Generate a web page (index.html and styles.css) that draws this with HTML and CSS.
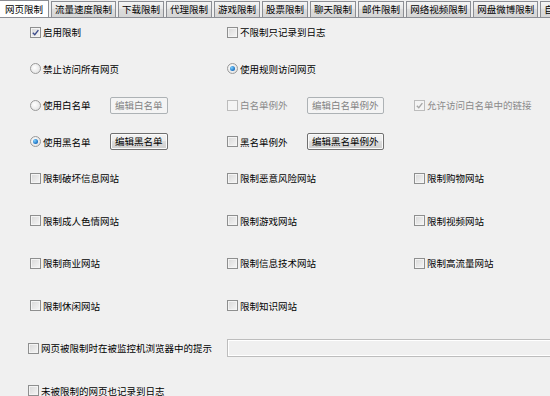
FILE: index.html
```html
<!DOCTYPE html>
<html lang="zh-CN">
<head>
<meta charset="utf-8">
<title>网页限制</title>
<link rel="stylesheet" href="styles.css">
</head>
<body>
<div class="tabs">
  <div class="tab active">网页限制</div>
  <div class="tab">流量速度限制</div>
  <div class="tab">下载限制</div>
  <div class="tab">代理限制</div>
  <div class="tab">游戏限制</div>
  <div class="tab">股票限制</div>
  <div class="tab">聊天限制</div>
  <div class="tab">邮件限制</div>
  <div class="tab">网络视频限制</div>
  <div class="tab">网盘微博限制</div>
  <div class="tab">自定义限制</div>
</div>
<div class="panel">
  <div class="group g1">
    <div class="row">
      <div class="cell"><label class="ctl"><span class="cb"><svg viewBox="0 0 10 10"><path d="M2 5.2 L4.2 7.5 L8.2 2.3" /></svg></span>启用限制</label></div>
      <div class="cell"><label class="ctl"><span class="cb"></span>不限制只记录到日志</label></div>
    </div>
    <div class="row">
      <div class="cell"><label class="ctl"><span class="rb"></span>禁止访问所有网页</label></div>
      <div class="cell"><label class="ctl"><span class="rb on"></span>使用规则访问网页</label></div>
    </div>
    <div class="row">
      <div class="cell"><label class="ctl w80"><span class="rb"></span>使用白名单</label><span class="btn disabled">编辑白名单</span></div>
      <div class="cell"><label class="ctl w80 dis"><span class="cb dis"></span>白名单例外</label><span class="btn disabled">编辑白名单例外</span></div>
      <div class="cell"><label class="ctl dis"><span class="cb dis"><svg viewBox="0 0 10 10"><path class="grey" d="M2 5.2 L4.2 7.5 L8.2 2.3" /></svg></span>允许访问白名单中的链接</label></div>
    </div>
    <div class="row">
      <div class="cell"><label class="ctl w80"><span class="rb on"></span>使用黑名单</label><span class="btn">编辑黑名单</span></div>
      <div class="cell"><label class="ctl w80"><span class="cb"></span>黑名单例外</label><span class="btn">编辑黑名单例外</span></div>
    </div>
  </div>
  <div class="group g2">
    <div class="row">
      <div class="cell"><label class="ctl"><span class="cb"></span>限制破坏信息网站</label></div>
      <div class="cell"><label class="ctl"><span class="cb"></span>限制恶意风险网站</label></div>
      <div class="cell"><label class="ctl"><span class="cb"></span>限制购物网站</label></div>
    </div>
    <div class="row">
      <div class="cell"><label class="ctl"><span class="cb"></span>限制成人色情网站</label></div>
      <div class="cell"><label class="ctl"><span class="cb"></span>限制游戏网站</label></div>
      <div class="cell"><label class="ctl"><span class="cb"></span>限制视频网站</label></div>
    </div>
    <div class="row">
      <div class="cell"><label class="ctl"><span class="cb"></span>限制商业网站</label></div>
      <div class="cell"><label class="ctl"><span class="cb"></span>限制信息技术网站</label></div>
      <div class="cell"><label class="ctl"><span class="cb"></span>限制高流量网站</label></div>
    </div>
    <div class="row">
      <div class="cell"><label class="ctl"><span class="cb"></span>限制休闲网站</label></div>
      <div class="cell"><label class="ctl"><span class="cb"></span>限制知识网站</label></div>
    </div>
    <div class="row wide">
      <div class="cell"><label class="ctl"><span class="cb"></span>网页被限制时在被监控机浏览器中的提示</label></div>
      <div class="cell"><span class="textbox"></span></div>
    </div>
    <div class="row wide">
      <div class="cell"><label class="ctl"><span class="cb"></span>未被限制的网页也记录到日志</label></div>
    </div>
  </div>
</div>
</body>
</html>
```
FILE: styles.css
```css
html, body {
  margin: 0;
  padding: 0;
  width: 550px;
  height: 396px;
  overflow: hidden;
  background: #f0f0f0;
  font-family: "Noto Sans CJK SC", "Noto Sans", sans-serif;
  font-size: 9.5px;
  color: #000;
}

.tabs {
  display: flex;
  height: 18px;
  box-sizing: border-box;
  border-bottom: 1px solid #8c8e94;
  white-space: nowrap;
  gap: 2px;
  padding-left: 0;
  overflow: hidden;
}

.tab {
  flex: none;
  box-sizing: border-box;
  height: 16px;
  margin-top: 1px;
  padding: 0 3px;
  line-height: 14px;
  border: 1px solid #8c8e94;
  border-bottom: none;
  background: linear-gradient(#f5f5f5, #e6e6e6 50%, #dcdcdc 50%, #d6d6d6);
}

.tab.active {
  height: 18px;
  margin-top: 0;
  padding: 0 5px;
  line-height: 16px;
  background: #ffffff;
  border-left: none;
  position: relative;
  z-index: 1;
}

.panel {
  padding-top: 4px;
}

.group {
  display: flex;
  flex-direction: column;
}

.g1 { gap: 16.5px; }
.g2 { gap: 22.5px; margin-top: 16.5px; }

.row {
  display: grid;
  grid-template-columns: 197px 187px 1fr;
  height: 20px;
  align-items: center;
  padding-left: 30px;
}

.row.wide {
  grid-template-columns: 199px 1fr;
  padding-left: 28px;
}

.cell {
  display: flex;
  align-items: center;
  white-space: nowrap;
}

.ctl {
  display: flex;
  align-items: center;
  gap: 2px;
}

.w80 { width: 80px; flex: none; }

.dis { color: #8a8a8a; }

.cb {
  flex: none;
  width: 9px;
  height: 9px;
  border: 1px solid #8e8f8f;
  background: linear-gradient(135deg, #d8d8d8, #f6f6f6);
  box-shadow: inset 0 0 0 1px #f4f4f4;
  display: inline-flex;
  position: relative;
}

.cb.dis {
  border-color: #bcbcbc;
  background: #f4f4f4;
}

.cb svg {
  width: 9px;
  height: 9px;
}

.cb svg path {
  fill: none;
  stroke: #3b4a8a;
  stroke-width: 1.5;
}

.cb svg path.grey {
  stroke: #a6a6a6;
}

.rb {
  flex: none;
  width: 9px;
  height: 9px;
  border: 1px solid #9a9a9a;
  border-radius: 50%;
  background: radial-gradient(circle at 40% 40%, #ffffff, #dcdcdc);
  position: relative;
}

.rb.on::after {
  content: "";
  position: absolute;
  left: 2px;
  top: 2px;
  width: 5px;
  height: 5px;
  border-radius: 50%;
  background: radial-gradient(circle at 35% 35%, #7cd0ff, #1a6fc0 70%, #0c4f96);
}

.btn {
  flex: none;
  box-sizing: border-box;
  height: 17px;
  line-height: 15px;
  padding: 0 4px;
  border: 1px solid #707070;
  border-radius: 2px;
  background: linear-gradient(#f3f3f3, #ebebeb 50%, #dddddd 50%, #cfcfcf);
  box-shadow: inset 0 0 0 1px #fbfbfb;
  color: #000;
}

.btn.disabled {
  border-color: #adb2b5;
  background: #f4f4f4;
  box-shadow: none;
  color: #838383;
}

.textbox {
  display: block;
  width: 340px;
  height: 18px;
  box-sizing: border-box;
  border: 1px solid #bdbdbd;
  box-shadow: inset 0 0 0 1px #ffffff;
  background: #f0f0f0;
}
```
